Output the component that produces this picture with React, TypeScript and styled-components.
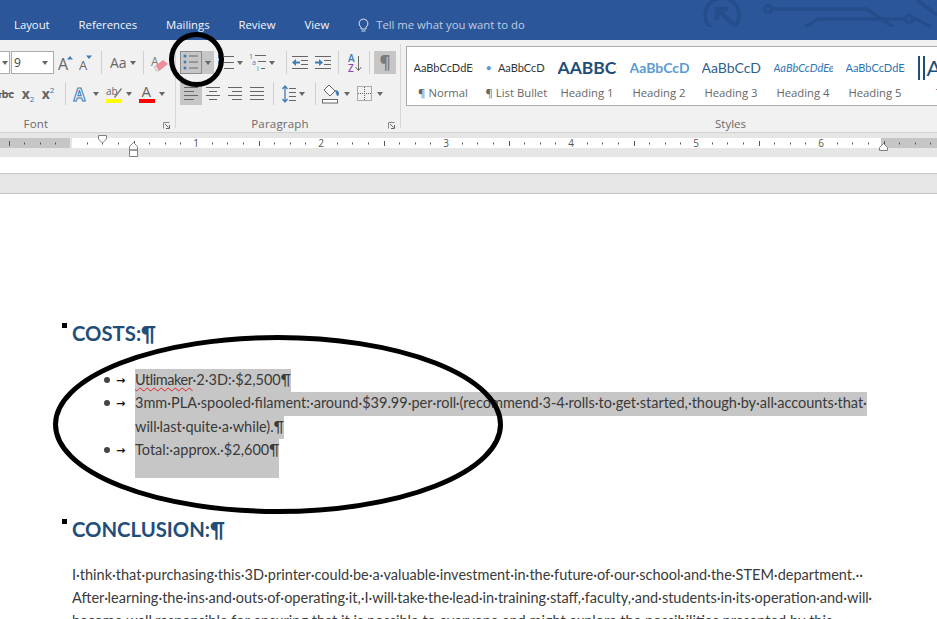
import React from "react";
import styled, { createGlobalStyle } from "styled-components";

const Global = createGlobalStyle`
  html, body { margin: 0; padding: 0; background: #fff; width: 937px; height: 619px; overflow: hidden; }
  #root { width: 937px; height: 619px; }
`;

const UI = `"Open Sans", "Liberation Sans", sans-serif`;
const DOC = `Lato, "Open Sans", sans-serif`;

const Page = styled.div`
  position: relative;
  width: 937px;
  height: 619px;
  overflow: hidden;
  background: #fff;
  font-family: ${UI};
`;

const TitleBar = styled.header`
  position: relative;
  height: 40px;
  background: #2b579a;
  display: flex;
  align-items: flex-start;
  gap: 29px;
  padding: 17px 0 0 14px;
  box-sizing: border-box;
  color: #fff;
  font-size: 11.3px;
  line-height: 16px;
`;
const Tab = styled.span`
  white-space: nowrap;
  color: #f4f6fa;
`;
const TellMe = styled.span`
  display: flex;
  align-items: center;
  gap: 7px;
  white-space: nowrap;
  color: #bfcde3;
`;
const Decor = styled.svg`
  position: absolute;
  right: 0;
  top: 0;
`;

const Ribbon = styled.section`
  display: flex;
  height: 93px;
  box-sizing: border-box;
  background: #f1f1f1;
  border-bottom: 1px solid #d2d2d2;
  overflow: hidden;
`;
const Group = styled.div<{ $w: number; $pad?: number }>`
  position: relative;
  flex: none;
  width: ${(p) => p.$w}px;
  display: flex;
  flex-direction: column;
  padding: 11px 0 0 ${(p) => p.$pad ?? 0}px;
  box-sizing: border-box;
`;
const GroupRule = styled.div`
  flex: none;
  width: 1px;
  height: 84px;
  margin-top: 4px;
  background: #d6d6d6;
`;
const Row = styled.div`
  display: flex;
  align-items: center;
  height: 23px;
  margin-bottom: 8px;
`;
const Label = styled.div<{ $pr: number }>`
  position: absolute;
  left: 0;
  right: 0;
  top: 76px;
  padding-right: ${(p) => p.$pr}px;
  text-align: center;
  font-size: 11.5px;
  line-height: 16px;
  color: #6a6a6a;
  letter-spacing: 0.2px;
`;
const Launcher = styled.svg`
  position: absolute;
  right: 5px;
  top: 82px;
`;
const Btn = styled.div<{ $w: number; $active?: boolean; $framed?: boolean; $ml?: number }>`
  flex: none;
  width: ${(p) => p.$w}px;
  height: 23px;
  box-sizing: border-box;
  margin-left: ${(p) => p.$ml ?? 0}px;
  display: flex;
  align-items: center;
  justify-content: center;
  background: ${(p) => (p.$active ? "#c6c6c6" : "transparent")};
  border: ${(p) => (p.$framed ? "1px solid #8c8c8c" : "none")};
`;
const StrikeBtn = styled.div`
  flex: none;
  width: 18px;
  height: 23px;
  box-sizing: border-box;
  padding-right: 4px;
  overflow: hidden;
  display: flex;
  align-items: center;
  justify-content: flex-end;
`;
const CaretBtn = styled.div<{ $w: number; $pl: number; $gap: number; $ml?: number }>`
  flex: none;
  width: ${(p) => p.$w}px;
  height: 23px;
  box-sizing: border-box;
  margin-left: ${(p) => p.$ml ?? 0}px;
  padding-left: ${(p) => p.$pl}px;
  display: flex;
  align-items: center;
  gap: ${(p) => p.$gap}px;
`;
const Caret = styled.span`
  flex: none;
  width: 0;
  height: 0;
  border-left: 3.5px solid transparent;
  border-right: 3.5px solid transparent;
  border-top: 4px solid #666;
`;
const Sep = styled.span<{ $l: number; $r: number }>`
  flex: none;
  width: 1px;
  height: 23px;
  margin: 0 ${(p) => p.$r}px 0 ${(p) => p.$l}px;
  background: #d0d0d0;
`;
const ComboTail = styled.div`
  flex: none;
  width: 10px;
  height: 23px;
  box-sizing: border-box;
  background: #fff;
  border: 1px solid #ababab;
  border-left: none;
  display: flex;
  align-items: center;
  justify-content: center;
`;
const SizeBox = styled.div`
  flex: none;
  width: 43px;
  height: 23px;
  box-sizing: border-box;
  margin-left: 1px;
  background: #fff;
  border: 1px solid #ababab;
  padding: 0 5px 0 2px;
  display: flex;
  align-items: center;
  justify-content: space-between;
  font-size: 12px;
  color: #444;
`;
const AaLabel = styled.span`
  font-size: 14px;
  color: #666;
  line-height: 23px;
  margin-left: 2px;
`;
const Strike = styled.span`
  flex: none;
  font-size: 11px;
  font-weight: 700;
  color: #666;
  text-decoration: line-through;
`;
const Script = styled.span`
  display: inline-block;
  white-space: nowrap;
  font-size: 14px;
  font-weight: 700;
  color: #666;
  line-height: 23px;
`;
const Sub = styled.sub`
  font-size: 8px;
  font-weight: 400;
  color: #2e75b6;
  line-height: 0;
  vertical-align: -3px;
`;
const Sup = styled.sup`
  font-size: 8px;
  font-weight: 400;
  color: #2e75b6;
  line-height: 0;
  vertical-align: 6px;
`;
const Pilcrow = styled.span`
  font-size: 17px;
  font-weight: 700;
  color: #7a7a7a;
  line-height: 23px;
`;

const StylesGroup = styled.div`
  position: relative;
  flex: 1;
  min-width: 0;
  padding: 6px 0 0 5px;
`;
const Gallery = styled.div`
  display: flex;
  height: 60px;
  box-sizing: border-box;
  width: 560px;
  background: #fff;
  border: 1px solid #ababab;
`;
const StyleItem = styled.div`
  flex: none;
  width: 72px;
  padding: 6px 6.5px 0;
  box-sizing: border-box;
  display: flex;
  flex-direction: column;
`;
const Preview = styled.div<{ $size: number; $color: string; $bold?: boolean; $italic?: boolean }>`
  height: 30px;
  width: 59px;
  overflow: hidden;
  white-space: nowrap;
  line-height: 30px;
  font-family: ${DOC};
  font-size: ${(p) => p.$size}px;
  color: ${(p) => p.$color};
  font-weight: ${(p) => (p.$bold ? 700 : 400)};
  font-style: ${(p) => (p.$italic ? "italic" : "normal")};
`;
const PreviewDot = styled.span`
  color: #5b9bd5;
  margin-right: 6px;
`;
const TitleMark = styled.span`
  display: inline-block;
  font-size: 22px;
  line-height: 24px;
  color: #1f4e79;
  border-left: 2px solid #1f4e79;
  padding-left: 2px;
  box-shadow: -3px 0 0 #fff, -5px 0 0 #1f4e79;
  margin-left: 5px;
`;
const StyleName = styled.div`
  margin-top: 2px;
  text-align: center;
  white-space: nowrap;
  font-size: 11.3px;
  line-height: 16px;
  color: #666;
`;
const StylesLabel = styled.div`
  position: absolute;
  left: 0;
  right: 0;
  top: 76px;
  padding-left: 123px;
  text-align: center;
  font-size: 11.5px;
  line-height: 16px;
  color: #6a6a6a;
`;

const RulerBand = styled.div`
  height: 24px;
  background: #e6e6e6;
`;
const RulerArt = styled.svg`
  display: block;
`;
const Gap = styled.div`
  height: 16px;
  background: #fff;
`;
const PageEdge = styled.div`
  height: 21px;
  box-sizing: border-box;
  background: #e6e6e6;
  border-top: 1px solid #c6c6c6;
  border-bottom: 1px solid #c6c6c6;
`;

const Doc = styled.main`
  padding: 124px 0 0 72px;
  font-family: ${DOC};
  color: #3a3a3a;
  font-size: 14.5px;
`;
const Heading = styled.h2<{ $mt?: number }>`
  position: relative;
  margin: ${(p) => p.$mt ?? 0}px 0 0;
  font-size: 20.3px;
  line-height: 31px;
  font-weight: 700;
  color: #1f4e79;
  white-space: nowrap;
  &::before {
    content: "";
    position: absolute;
    left: -10px;
    top: 5px;
    width: 5px;
    height: 5px;
    background: #000;
  }
`;
const List = styled.ul`
  list-style: none;
  margin: 20px 0 0;
  padding: 0 0 0 32px;
`;
const Item = styled.li`
  display: flex;
  align-items: flex-start;
`;
const BulletDot = styled.span`
  flex: none;
  width: 6px;
  height: 6px;
  margin: 8px 6px 0 0;
  border-radius: 50%;
  background: #444;
`;
const TabArrow = styled.span`
  flex: none;
  width: 19px;
  height: 23.4px;
  line-height: 23px;
  font-family: "DejaVu Sans", sans-serif;
  font-size: 11px;
  font-weight: 700;
  color: #111;
`;
const SelLine = styled.div<{ $extra?: number }>`
  width: fit-content;
  height: ${(p) => 23.4 + (p.$extra ?? 0)}px;
  line-height: 22.4px;
  white-space: nowrap;
  background: #c6c6c6;
`;
const Misspelt = styled.span`
  letter-spacing: -0.45px;
  text-decoration: underline wavy #e02020 1px;
  text-underline-offset: 2px;
`;
const Body = styled.p`
  margin: 18px 0 0;
  line-height: 23.4px;
  white-space: nowrap;
`;
const Annotation = styled.svg`
  position: absolute;
  left: 0;
  top: 0;
  pointer-events: none;
`;

const BLUE = "#3f7cb8";
const GREY = "#666";

const Lines = ({ x1s, x2s, ys, w = 16, h = 15 }: { x1s: number[]; x2s: number[]; ys: number[]; w?: number; h?: number }) => (
  <svg width={w} height={h} viewBox={`0 0 ${w} ${h}`}>
    {ys.map((y, i) => (
      <line key={i} x1={x1s[i]} x2={x2s[i]} y1={y} y2={y} stroke={GREY} strokeWidth="1" />
    ))}
  </svg>
);

const Launch = () => (
  <Launcher width="7" height="7" viewBox="0 0 7 7">
    <path d="M.5 6.5V.5h6" fill="none" stroke="#888" />
    <path d="M2 2l3.5 3.5M6.5 3v3.5H3" fill="none" stroke="#666" />
  </Launcher>
);

const GrowA = ({ up }: { up: boolean }) => (
  <svg width="20" height="20" viewBox="0 0 20 20">
    <text x="3" y="17" fontFamily="Open Sans" fontSize={up ? 16 : 13} fill={GREY}>A</text>
    {up ? <path d="M12 6.5l3-3.5 3 3.5z" fill={BLUE} /> : <path d="M10 2.5h6l-3 3.5z" fill={BLUE} />}
  </svg>
);
const Eraser = () => (
  <svg width="19" height="20" viewBox="0 0 19 20">
    <text x="1" y="13" fontFamily="Open Sans" fontSize="12" fill="#777">A</text>
    <path d="M4 14l9-7 5 4-9 7H6z" fill="#ec8e9c" />
    <path d="M4 14l3 4h2l-3-5z" fill="#f4f4f4" stroke="#aaa" strokeWidth=".5" />
  </svg>
);
const BulletsIcon = () => (
  <svg width="16" height="17" viewBox="0 0 16 17">
    {[2, 8, 14].map((y) => (
      <React.Fragment key={y}>
        <circle cx="2" cy={y} r="1.5" fill={BLUE} />
        <line x1="6" x2="15" y1={y} y2={y} stroke={GREY} />
      </React.Fragment>
    ))}
  </svg>
);
const NumberedIcon = () => (
  <svg width="18" height="17" viewBox="0 0 18 17">
    {[2.5, 8.5, 14.5].map((y, i) => (
      <React.Fragment key={y}>
        <rect x="1" y={y - 2} width="2" height="4" fill={BLUE} opacity={i === 1 ? 0.8 : 1} />
        <line x1="7" x2="17" y1={y} y2={y} stroke={GREY} />
      </React.Fragment>
    ))}
  </svg>
);
const MultiIcon = () => (
  <svg width="18" height="19" viewBox="0 0 18 19">
    <text x="0" y="6" fontFamily="Open Sans" fontSize="7" fill={BLUE}>1</text>
    <text x="3" y="12" fontFamily="Open Sans" fontSize="7" fill={BLUE}>a</text>
    <text x="8" y="18" fontFamily="Open Sans" fontSize="7" fill={BLUE}>i</text>
    <line x1="6" x2="17" y1="2.5" y2="2.5" stroke={GREY} />
    <line x1="9" x2="17" y1="8.5" y2="8.5" stroke={GREY} />
    <line x1="12" x2="16" y1="15.5" y2="15.5" stroke={GREY} />
  </svg>
);
const IndentIcon = ({ out }: { out: boolean }) => (
  <svg width="17" height="15" viewBox="0 0 17 15">
    <line x1="0" x2="16" y1="1.5" y2="1.5" stroke={GREY} />
    <line x1="9" x2="16" y1="5.5" y2="5.5" stroke={GREY} />
    <line x1="9" x2="16" y1="9.5" y2="9.5" stroke={GREY} />
    <line x1="0" x2="16" y1="13.5" y2="13.5" stroke={GREY} />
    {out ? (
      <path d="M0 7.5L4 4v2.5h4v2H4V11z" fill={BLUE} />
    ) : (
      <path d="M8 7.5L4 4v2.5H0v2h4V11z" fill={BLUE} />
    )}
  </svg>
);
const SortIcon = () => (
  <svg width="14" height="20" viewBox="0 0 14 20">
    <text x="0" y="9" fontFamily="Open Sans" fontWeight="600" fontSize="10" fill={BLUE}>A</text>
    <text x="0" y="19" fontFamily="Open Sans" fontWeight="600" fontSize="10" fill="#8a4bb0">Z</text>
    <path d="M10.5 3v14M7.5 14l3 3.5 3-3.5" fill="none" stroke={GREY} />
  </svg>
);
const TextEffect = () => (
  <svg width="16" height="18" viewBox="0 0 16 18">
    <text x="0.5" y="16" fontFamily="Open Sans" fontWeight="700" fontSize="17" fill="#eaf2fa" stroke="#3f7cb8" strokeWidth="1">A</text>
  </svg>
);
const Highlight = () => (
  <svg width="16" height="20" viewBox="0 0 16 20">
    <text x="0" y="11" fontFamily="Open Sans" fontSize="10" fill={GREY}>ab</text>
    <path d="M8 13l7-9 1 1-7 9z" fill="#777" />
    <rect x="0" y="15" width="16" height="4" fill="#ffff00" />
  </svg>
);
const FontColor = () => (
  <svg width="16" height="20" viewBox="0 0 16 20">
    <text x="2.5" y="13" fontFamily="Open Sans" fontSize="15" fill={GREY}>A</text>
    <rect x="0" y="15" width="16" height="4" fill="#ff0000" />
  </svg>
);
const LineSpacing = () => (
  <svg width="14" height="20" viewBox="0 0 14 20">
    <path d="M3 2v16M.5 5L3 2l2.5 3M.5 15L3 18l2.5-3" fill="none" stroke={BLUE} strokeWidth="1.3" />
    {[4.5, 8.5, 12.5, 16.5].map((y) => (
      <line key={y} x1="7" x2="14" y1={y} y2={y} stroke={GREY} />
    ))}
  </svg>
);
const Shading = () => (
  <svg width="18" height="21" viewBox="0 0 18 21">
    <path d="M7 2l6 6-5 5-6-6z" fill="#fff" stroke={GREY} />
    <path d="M13 7c2 0 4 1.500 4 3.500S16 13 15.500 13 14 11 13 7z" fill={BLUE} />
    <rect x=".5" y="16.500" width="15" height="3.500" fill="#fff" stroke={GREY} />
  </svg>
);
const BordersIcon = () => (
  <svg width="15" height="15" viewBox="0 0 15 15">
    <rect x=".5" y=".5" width="14" height="14" fill="none" stroke="#666" strokeDasharray="1 1" />
    <path d="M7.500 1v13M1 7.500h13" stroke="#666" strokeDasharray="1 1" />
  </svg>
);

const Ruler = () => {
  const marks: React.ReactNode[] = [];
  for (let k = -4; k <= 55; k++) {
    const x = 71 + k * 15.625;
    if (k === 0) continue;
    if (k % 8 === 0) {
      marks.push(
        <text key={k} x={x} y="14" textAnchor="middle" fontFamily="Open Sans" fontSize="10" fill="#555">
          {k / 8}
        </text>
      );
    } else if (k % 4 === 0) {
      marks.push(<rect key={k} x={Math.round(x)} y="8" width="1" height="5" fill="#555" />);
    } else {
      marks.push(<rect key={k} x={Math.round(x)} y="9.500" width="1" height="2" fill="#555" />);
    }
  }
  return (
    <RulerArt width="937" height="24" viewBox="0 0 937 24">
      <rect x="0" y="5" width="70" height="10" fill="#c6c6c6" />
      <rect x="72" y="5" width="809" height="10" fill="#fff" />
      <rect x="881" y="5" width="56" height="10" fill="#c6c6c6" />
      {marks}
      <path d="M98.500 2.500h8v3.500l-4 4-4-4z" fill="#fff" stroke="#808080" />
      <path d="M129.500 17v-3.500l4-4 4 4V17zM129.500 17h8v6.500h-8z" fill="#fff" stroke="#808080" />
      <path d="M879.500 17.500v-3l4-4 4 4v3z" fill="#fff" stroke="#808080" />
    </RulerArt>
  );
};

const styleItems = [
  { name: "¶ Normal", text: "AaBbCcDdEeFf", size: 11, color: "#333" },
  { name: "¶ List Bullet", text: "AaBbCcDdEe", size: 11, color: "#333", dot: true },
  { name: "Heading 1", text: "AABBCCDD", size: 17.5, color: "#1f4e79", bold: true },
  { name: "Heading 2", text: "AaBbCcDdEe", size: 14, color: "#5b9bd5", bold: true },
  { name: "Heading 3", text: "AaBbCcDdEe", size: 14, color: "#2e5f8e" },
  { name: "Heading 4", text: "AaBbCcDdEeFf", size: 11, color: "#2e74b5", italic: true },
  { name: "Heading 5", text: "AaBbCcDdEeFf", size: 11, color: "#2e74b5" },
];

export default function App() {
  return (
    <Page>
      <Global />
      <TitleBar>
        {["Layout", "References", "Mailings", "Review", "View"].map((t) => (
          <Tab key={t}>{t}</Tab>
        ))}
        <TellMe>
          <svg width="11" height="15" viewBox="0 0 11 15">
            <path d="M5.500 1a4.500 4.500 0 0 0-2.500 8.200V11h5V9.200A4.500 4.500 0 0 0 5.500 1zM3.500 13h4" fill="none" stroke="#dbe3ef" />
          </svg>
          Tell me what you want to do
        </TellMe>
        <Decor width="247" height="27" viewBox="690 0 247 27">
          <g fill="none" stroke="#244e8b" strokeWidth="3.500">
            <circle cx="722" cy="15" r="17" />
            <path d="M733 24L717 9M717 20V9h11" strokeWidth="4.500" />
            <circle cx="768" cy="9" r="3.500" />
            <path d="M772 9h95l26 18" />
            <path d="M805 27l13-8h87" />
            <circle cx="909" cy="19" r="3.500" />
            <path d="M913 19h3l15 8" />
            <path d="M917 0l20 15" />
          </g>
        </Decor>
      </TitleBar>

      <Ribbon>
        <Group $w={175}>
          <Row>
            <ComboTail><Caret /></ComboTail>
            <SizeBox>9<Caret /></SizeBox>
            <Btn $w={20} $ml={1}><GrowA up /></Btn>
            <Btn $w={22}><GrowA up={false} /></Btn>
            <Sep $l={4} $r={5} />
            <CaretBtn $w={30} $pl={1} $gap={3}><AaLabel>Aa</AaLabel><Caret /></CaretBtn>
            <Sep $l={6} $r={6} />
            <Btn $w={19}><Eraser /></Btn>
          </Row>
          <Row>
            <StrikeBtn><Strike>abc</Strike></StrikeBtn>
            <Btn $w={20}><Script>x<Sub>2</Sub></Script></Btn>
            <Btn $w={20}><Script>x<Sup>2</Sup></Script></Btn>
            <Sep $l={7} $r={6} />
            <CaretBtn $w={33} $pl={1} $gap={4}><TextEffect /><Caret /></CaretBtn>
            <CaretBtn $w={34} $pl={1} $gap={4}><Highlight /><Caret /></CaretBtn>
            <CaretBtn $w={30} $pl={0} $gap={4}><FontColor /><Caret /></CaretBtn>
          </Row>
          <Label $pr={103}>Font</Label>
          <Launch />
        </Group>
        <GroupRule />
        <Group $w={224} $pad={4}>
          <Row>
            <Btn $w={22} $active $framed><BulletsIcon /></Btn>
            <Btn $w={12} $active><Caret /></Btn>
            <CaretBtn $w={32} $pl={3} $gap={2}><NumberedIcon /><Caret /></CaretBtn>
            <CaretBtn $w={32} $pl={3} $gap={2}><MultiIcon /><Caret /></CaretBtn>
            <Sep $l={8} $r={5} />
            <Btn $w={17}><IndentIcon out /></Btn>
            <Btn $w={17} $ml={6}><IndentIcon out={false} /></Btn>
            <Sep $l={6} $r={9} />
            <Btn $w={14}><SortIcon /></Btn>
            <Sep $l={7} $r={4} />
            <Btn $w={22} $active><Pilcrow>¶</Pilcrow></Btn>
          </Row>
          <Row>
            <Btn $w={22} $active><Lines w={16} x1s={[1, 1, 1, 1]} x2s={[15, 11, 15, 11]} ys={[2.5, 6.5, 10.5, 14.5]} h={17} /></Btn>
            <Btn $w={22}><Lines w={16} x1s={[1, 4, 1, 4]} x2s={[15, 12, 15, 12]} ys={[2.5, 6.5, 10.5, 14.5]} h={17} /></Btn>
            <Btn $w={22}><Lines w={16} x1s={[1, 5, 1, 5]} x2s={[15, 15, 15, 15]} ys={[2.5, 6.5, 10.5, 14.5]} h={17} /></Btn>
            <Btn $w={22}><Lines w={16} x1s={[1, 1, 1, 1]} x2s={[15, 15, 15, 15]} ys={[2.5, 6.5, 10.5, 14.5]} h={17} /></Btn>
            <Sep $l={5} $r={8} />
            <CaretBtn $w={27} $pl={0} $gap={3}><LineSpacing /><Caret /></CaretBtn>
            <Sep $l={6} $r={6} />
            <CaretBtn $w={30} $pl={0} $gap={4}><Shading /><Caret /></CaretBtn>
            <CaretBtn $w={30} $pl={0} $ml={5} $gap={5}><BordersIcon /><Caret /></CaretBtn>
          </Row>
          <Label $pr={16}>Paragraph</Label>
          <Launch />
        </Group>
        <GroupRule />
        <StylesGroup>
          <Gallery>
            {styleItems.map((s) => (
              <StyleItem key={s.name}>
                <Preview $size={s.size} $color={s.color} $bold={s.bold} $italic={s.italic}>
                  {s.dot && <PreviewDot>•</PreviewDot>}
                  {s.text}
                </Preview>
                <StyleName>{s.name}</StyleName>
              </StyleItem>
            ))}
            <StyleItem>
              <Preview $size={22} $color="#1f4e79">
                <TitleMark>AA</TitleMark>
              </Preview>
              <StyleName>Title</StyleName>
            </StyleItem>
          </Gallery>
          <StylesLabel>Styles</StylesLabel>
        </StylesGroup>
      </Ribbon>

      <RulerBand><Ruler /></RulerBand>
      <Gap />
      <PageEdge />

      <Doc>
        <Heading>COSTS:¶</Heading>
        <List>
          <Item>
            <BulletDot />
            <TabArrow>→</TabArrow>
            <div>
              <SelLine><Misspelt>Utlimaker</Misspelt>·2·3D:·$2,500¶</SelLine>
            </div>
          </Item>
          <Item>
            <BulletDot />
            <TabArrow>→</TabArrow>
            <div>
              <SelLine>3mm·PLA·spooled·filament:·around·$39.99·per·roll·(recommend·3-4·rolls·to·get·started,·though·by·all·accounts·that·</SelLine>
              <SelLine>will·last·quite·a·while).¶</SelLine>
            </div>
          </Item>
          <Item>
            <BulletDot />
            <TabArrow>→</TabArrow>
            <div>
              <SelLine $extra={15.6}>Total:·approx.·$2,600¶</SelLine>
            </div>
          </Item>
        </List>
        <Heading $mt={35.5}>CONCLUSION:¶</Heading>
        <Body>
          I·think·that·purchasing·this·3D·printer·could·be·a·valuable·investment·in·the·future·of·our·school·and·the·STEM·department.··
          <br />
          After·learning·the·ins·and·outs·of·operating·it,·I·will·take·the·lead·in·training·staff,·faculty,·and·students·in·its·operation·and·will·
          <br />
          become·well·responsible·for·ensuring·that·it·is·possible·to·everyone·and·might·explore·the·possibilities·presented·by·this·
        </Body>
      </Doc>

      <Annotation width="937" height="619" viewBox="0 0 937 619">
        <circle cx="196.500" cy="59.500" r="25" fill="none" stroke="#000" strokeWidth="5" />
        <ellipse cx="278" cy="424.500" rx="222.500" ry="87" fill="none" stroke="#000" strokeWidth="5" />
      </Annotation>
    </Page>
  );
}
